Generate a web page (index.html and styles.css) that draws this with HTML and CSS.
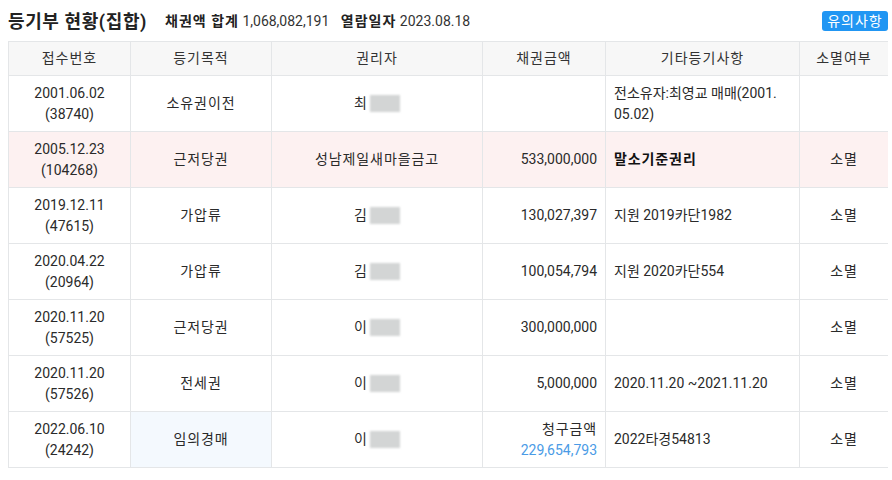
FILE: index.html
```html
<!DOCTYPE html>
<html lang="ko">
<head>
<meta charset="utf-8">
<link rel="stylesheet" href="styles.css">
</head>
<body>
<div class="top">
  <h1 class="title">등기부 현황(집합)</h1>
  <div class="summary">
    <b>채권액 합계</b> <span class="val">1,068,082,191</span>
    <b class="gap">열람일자</b> <span class="val">2023.08.18</span>
  </div>
  <button class="notice">유의사항</button>
</div>
<table class="reg">
  <colgroup>
    <col class="c1"><col class="c2"><col class="c3"><col class="c4"><col class="c5"><col class="c6">
  </colgroup>
  <thead>
    <tr><th>접수번호</th><th>등기목적</th><th>권리자</th><th>채권금액</th><th>기타등기사항</th><th>소멸여부</th></tr>
  </thead>
  <tbody>
    <tr>
      <td class="ctr">2001.06.02<br>(38740)</td>
      <td class="ctr ko">소유권이전</td>
      <td class="ctr ko">최<span class="blur"></span></td>
      <td class="num"></td>
      <td class="etc">전소유자:최영교 매매(2001.<wbr>05.02)</td>
      <td class="ctr ko"></td>
    </tr>
    <tr class="base">
      <td class="ctr">2005.12.23<br>(104268)</td>
      <td class="ctr ko">근저당권</td>
      <td class="ctr ko">성남제일새마을금고</td>
      <td class="num">533,000,000</td>
      <td class="etc ko"><b>말소기준권리</b></td>
      <td class="ctr ko">소멸</td>
    </tr>
    <tr>
      <td class="ctr">2019.12.11<br>(47615)</td>
      <td class="ctr ko">가압류</td>
      <td class="ctr ko">김<span class="blur"></span></td>
      <td class="num">130,027,397</td>
      <td class="etc">지원 2019카단1982</td>
      <td class="ctr ko">소멸</td>
    </tr>
    <tr>
      <td class="ctr">2020.04.22<br>(20964)</td>
      <td class="ctr ko">가압류</td>
      <td class="ctr ko">김<span class="blur"></span></td>
      <td class="num">100,054,794</td>
      <td class="etc">지원 2020카단554</td>
      <td class="ctr ko">소멸</td>
    </tr>
    <tr>
      <td class="ctr">2020.11.20<br>(57525)</td>
      <td class="ctr ko">근저당권</td>
      <td class="ctr ko">이<span class="blur"></span></td>
      <td class="num">300,000,000</td>
      <td class="etc"></td>
      <td class="ctr ko">소멸</td>
    </tr>
    <tr>
      <td class="ctr">2020.11.20<br>(57526)</td>
      <td class="ctr ko">전세권</td>
      <td class="ctr ko">이<span class="blur"></span></td>
      <td class="num">5,000,000</td>
      <td class="etc">2020.11.20 ~2021.11.20</td>
      <td class="ctr ko">소멸</td>
    </tr>
    <tr>
      <td class="ctr">2022.06.10<br>(24242)</td>
      <td class="ctr ko auction">임의경매</td>
      <td class="ctr ko">이<span class="blur"></span></td>
      <td class="num"><span class="ko">청구금액</span><br><span class="claim">229,654,793</span></td>
      <td class="etc">2022타경54813</td>
      <td class="ctr ko">소멸</td>
    </tr>
  </tbody>
</table>
</body>
</html>
```
FILE: styles.css
```css
html, body {
  margin: 0;
  background: #fff;
}
body {
  width: 880px;
  padding: 0 0 0 8px;
  font-family: Roboto, "Noto Sans CJK KR", sans-serif;
  font-size: 14px;
  color: #222;
}
.top {
  display: flex;
  align-items: center;
  height: 41px;
  padding-bottom: 1px;
  box-sizing: border-box;
}
.title {
  margin: 0;
  font-size: 18px;
  font-weight: 700;
  color: #222;
  letter-spacing: 0.6px;
}
.summary {
  margin-left: 18px;
  font-size: 14px;
  color: #333;
  flex: 1;
}
.summary b {
  font-weight: 700;
  color: #222;
  letter-spacing: 1px;
}
.summary .gap {
  margin-left: 8px;
}
.notice {
  background: #2196f3;
  color: #fff;
  border: 0;
  border-radius: 3px;
  font-family: Roboto, "Noto Sans CJK KR", sans-serif;
  font-size: 14px;
  letter-spacing: 1px;
  height: 20px;
  width: 66px;
  padding: 0;
  line-height: 20px;
  margin-top: 2px;
}
.reg {
  border-collapse: collapse;
  table-layout: fixed;
  width: 880px;
  color: #2a2a2a;
}
.c1 { width: 122px; }
.c2 { width: 141px; }
.c3 { width: 211px; }
.c4 { width: 123px; }
.c5 { width: 194px; }
.c6 { width: 89px; }
.reg th, .reg td {
  border: 1px solid #e4e6e8;
  padding: 0 8px;
  line-height: 21px;
  vertical-align: middle;
}
.reg th {
  background: #f7f7f7;
  font-weight: 400;
  height: 33px;
  color: #333;
  letter-spacing: 1px;
}
.reg td {
  height: 55px;
}
.ko { letter-spacing: 0.9px; }
.ctr { text-align: center; }
.num { text-align: right; }
.etc { text-align: left; word-break: keep-all; }
.base td { background: #fdf1f1; }
.etc b { font-weight: 700; color: #111; }
.auction { background: #f4f9fe; }
.claim { color: #4a9be6; }
.blur {
  display: inline-block;
  width: 30px;
  height: 17px;
  margin-left: 2px;
  vertical-align: -4px;
  background: #d3d5d5;
  filter: blur(1px);
}
```
